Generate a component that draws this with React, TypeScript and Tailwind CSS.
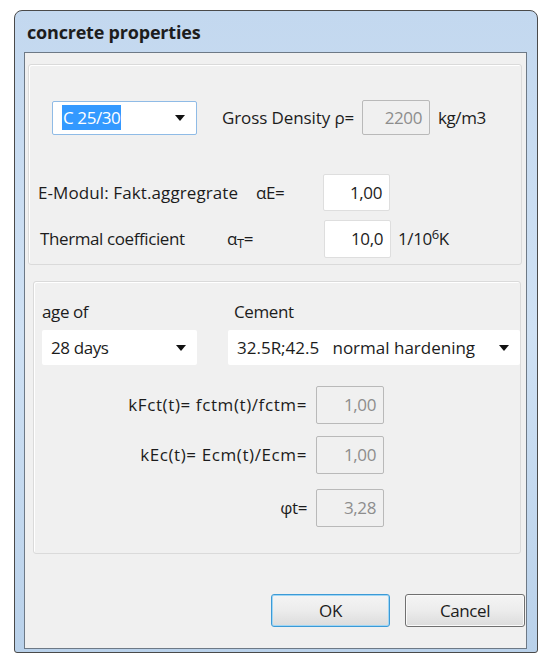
import React from "react";

const font = { fontFamily: '"Open Sans", "Noto Sans", sans-serif' };

function Arrow() {
  return (
    <svg width="10" height="6" viewBox="0 0 10 6" className="shrink-0">
      <path d="M0 0 H10 L5 6 Z" fill="#111" />
    </svg>
  );
}

function Combo({ children, className }: { children: React.ReactNode; className: string }) {
  return (
    <div className={`flex items-center justify-between bg-white rounded-[2px] pl-[9px] pr-[11px] ${className}`}>
      {children}
      <Arrow />
    </div>
  );
}

function ValueBox({ value, disabled, className }: { value: string; disabled?: boolean; className: string }) {
  return (
    <div
      className={`flex items-center justify-end pr-[7px] rounded-[2px] border tracking-[-0.4px] ${
        disabled ? "border-[#b9b9b9] bg-[#f0f0f0] text-[#8d8d8d]" : "border-[#dedede] bg-white text-[#1c1c1c]"
      } ${className}`}
    >
      {value}
    </div>
  );
}

export default function App() {
  return (
    <div className="w-[543px] h-[653px] bg-white pt-[10px] pl-[14px] overflow-hidden" style={font}>
      <div className="w-[524px] h-[643px] flex flex-col rounded-t-[8px] rounded-b-[3px] border border-[#4a4a4a] bg-gradient-to-b from-[#c3d8ef] via-[#cfe1f4] to-[#b9d1ea] pl-[9px] pr-[10px] pb-[3px]">
        <div className="h-[41px] flex items-center pl-[3px] pt-[1px] text-[18px] font-bold text-[#1d1d1d] tracking-[-0.2px]">
          concrete properties
        </div>

        <div className="flex-1 flex flex-col border border-[#6d7986] bg-[#f0f0f0] text-[17px] text-[#1c1c1c] tracking-[-0.4px]">
          {/* material / density / aggregate group */}
          <div className="mt-[11px] ml-[3px] mr-[4px] h-[201px] rounded-[3px] border border-[#dadada] shadow-[inset_1px_1px_0_#ffffff] flex flex-col">
            <div className="mt-[35px] flex items-center">
              <Combo className="ml-[23px] w-[145px] h-[34px] border border-[#8fbbe6] pl-[9px]">
                <span className="bg-[#3399ff] text-white px-[1px] leading-[25px]">C 25/30</span>
              </Combo>
              <span className="ml-[25px] w-[136px] whitespace-nowrap tracking-[-0.1px]">Gross Density ρ=</span>
              <ValueBox value="2200" disabled className="ml-[4px] w-[68px] h-[35px]" />
              <span className="ml-[8px]">kg/m3</span>
            </div>

            <div className="mt-[39px] flex items-center">
              <span className="ml-[9px] w-[218px] whitespace-nowrap tracking-[0.1px]">E-Modul: Fakt.aggregrate</span>
              <span className="w-[67px]">αE=</span>
              <ValueBox value="1,00" className="w-[67px] h-[37px]" />
            </div>

            <div className="mt-[9px] flex items-center">
              <span className="ml-[11px] w-[187px]">Thermal coefficient</span>
              <span className="w-[97px]">
                α<span className="text-[13px] relative top-[3px]">T</span>=
              </span>
              <ValueBox value="10,0" className="w-[67px] h-[38px]" />
              <span className="ml-[7px]">
                1/10<span className="text-[13px] relative -top-[6px]">6</span>K
              </span>
            </div>
          </div>

          {/* age / cement group */}
          <div className="mt-[16px] ml-[8px] mr-[5px] h-[273px] rounded-[3px] border border-[#dadada] shadow-[inset_1px_1px_0_#ffffff] flex flex-col">
            <div className="mt-[19px] flex items-center h-[22px]">
              <span className="ml-[8px] w-[192px]">age of</span>
              <span>Cement</span>
            </div>
            <div className="mt-[7px] flex items-center">
              <Combo className="ml-[8px] w-[155px] h-[35px]">
                <span>28 days</span>
              </Combo>
              <Combo className="ml-[31px] w-[292px] h-[35px] -mr-[4px]">
                <span className="whitespace-nowrap tracking-[0px]">32.5R;42.5&nbsp;&nbsp; normal hardening</span>
              </Combo>
            </div>

            <div className="mt-[21px] flex items-center tracking-[0.6px]">
              <span className="w-[273px] text-right">kFct(t)= fctm(t)/fctm=</span>
              <ValueBox value="1,00" disabled className="ml-[9px] w-[68px] h-[38px]" />
            </div>
            <div className="mt-[12px] flex items-center tracking-[0.6px]">
              <span className="w-[273px] text-right">kEc(t)= Ecm(t)/Ecm=</span>
              <ValueBox value="1,00" disabled className="ml-[9px] w-[68px] h-[38px]" />
            </div>
            <div className="mt-[15px] flex items-center">
              <span className="w-[273px] text-right">φt=</span>
              <ValueBox value="3,28" disabled className="ml-[9px] w-[68px] h-[38px]" />
            </div>
          </div>

          {/* dialog buttons */}
          <div className="mt-[40px] flex justify-end gap-[15px] pr-[1px]">
            <button className="w-[119px] h-[33px] rounded-[3px] border border-[#3c9ad6] shadow-[inset_0_0_0_1px_#9fd6f5] bg-gradient-to-b from-[#f4f4f4] via-[#ececec] to-[#dcdcdc] text-[17px] text-[#1c1c1c]">
              OK
            </button>
            <button className="w-[120px] h-[33px] rounded-[3px] border border-[#707070] shadow-[inset_0_0_0_1px_#fafafa] bg-gradient-to-b from-[#f4f4f4] via-[#ececec] to-[#dcdcdc] text-[17px] text-[#1c1c1c]">
              Cancel
            </button>
          </div>
        </div>
      </div>
    </div>
  );
}
